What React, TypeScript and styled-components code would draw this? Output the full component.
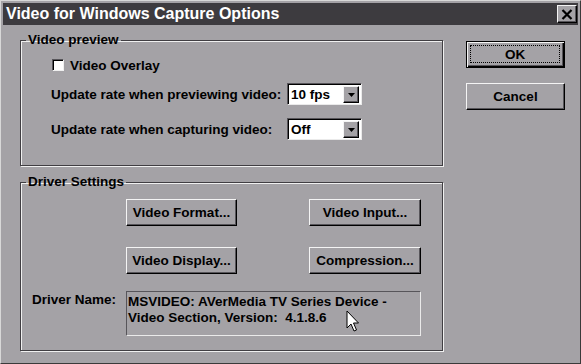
import React from "react";
import styled, { createGlobalStyle, css } from "styled-components";

const GlobalStyle = createGlobalStyle`
  html, body { margin: 0; padding: 0; background: #a4a2a6; }
  body { font-family: "Liberation Sans", Arial, sans-serif; }
  * { box-sizing: border-box; }
`;

const BG = "#a4a2a6";
const DARK = "#57555a";

const raised = css`
  border-top: 1px solid #f4f4f4;
  border-left: 1px solid #f4f4f4;
  border-right: 1px solid #000;
  border-bottom: 1px solid #000;
  box-shadow: inset -1px -1px 0 ${DARK};
`;

const Window = styled.div`
  width: 581px;
  height: 364px;
  background: ${BG};
  border-top: 1px solid #d8d8d8;
  border-left: 1px solid #d8d8d8;
  border-right: 1px solid #3a3a3a;
  border-bottom: 1px solid #3a3a3a;
  padding: 2px 2px 0 2px;
  display: flex;
  flex-direction: column;
  position: relative;
  overflow: hidden;
`;

const TitleBar = styled.div`
  height: 22px;
  background: #3d3b3f;
  display: flex;
  align-items: center;
  justify-content: space-between;
  padding: 0 1px 0 3px;
`;

const Title = styled.span`
  color: #fff;
  font-weight: bold;
  font-size: 16px;
`;

const CloseButton = styled.div`
  width: 20px;
  height: 18px;
  background: ${BG};
  ${raised};
  display: flex;
  align-items: center;
  justify-content: center;
`;

const Body = styled.div`
  display: grid;
  grid-template-columns: 423px 99px;
  column-gap: 23px;
  padding: 8px 0 0 17px;
  align-items: start;
`;

const LeftColumn = styled.div`
  display: flex;
  flex-direction: column;
  gap: 9px;
`;

const Group = styled.fieldset<{ $pt: number; $pb: number }>`
  margin: 0;
  min-width: 0;
  width: 423px;
  border: 1px solid #403e42;
  box-shadow: inset 1px 1px 0 #f0f0f0, 1px 1px 0 #f0f0f0;
  padding: ${(p) => p.$pt}px 0 ${(p) => p.$pb}px 0;
`;

const GroupContent = styled.div<{ $pl: number }>`
  padding-left: ${(p) => p.$pl}px;
`;

const Legend = styled.legend`
  margin-left: 5px;
  padding: 0 2px;
  font-size: 13.5px;
  line-height: 14px;
  font-weight: bold;
  color: #000;
`;

const Text = styled.span`
  font-size: 13.5px;
  font-weight: bold;
  color: #000;
  white-space: nowrap;
`;

const CheckRow = styled.label`
  display: flex;
  align-items: center;
  gap: 6px;
  height: 16px;
  padding-left: 1px;
  margin-bottom: 10px;
`;

const CheckBox = styled.span`
  width: 12px;
  height: 12px;
  background: #fff;
  border-top: 1px solid ${DARK};
  border-left: 1px solid ${DARK};
  border-right: 1px solid #f0f0f0;
  border-bottom: 1px solid #f0f0f0;
  box-shadow: inset 1px 1px 0 #000;
`;

const RateGrid = styled.div`
  display: grid;
  grid-template-columns: 236px 75px;
  row-gap: 13px;
  align-items: center;
`;

const Select = styled.div`
  height: 22px;
  width: 75px;
  background: #fff;
  border-top: 1px solid ${DARK};
  border-left: 1px solid ${DARK};
  border-right: 1px solid #eaeaea;
  border-bottom: 1px solid #eaeaea;
  box-shadow: inset 1px 1px 0 #000;
  display: flex;
  align-items: stretch;
  padding: 2px 2px 1px 3px;
`;

const SelectValue = styled.span`
  flex: 1;
  font-size: 13.5px;
  font-weight: bold;
  display: flex;
  align-items: center;
`;

const ArrowButton = styled.div`
  width: 16px;
  background: ${BG};
  ${raised};
  display: flex;
  align-items: center;
  justify-content: center;
`;

const DriverGrid = styled.div`
  display: grid;
  grid-template-columns: 94px 111px 72px 112px;
  grid-template-rows: 27px 27px 45px;
  row-gap: 21px;
  align-items: stretch;
`;

const PushButton = styled.div<{ $col: number }>`
  grid-column: ${(p) => p.$col};
  background: ${BG};
  ${raised};
  display: flex;
  align-items: center;
  justify-content: center;
  font-size: 13.5px;
  font-weight: bold;
  color: #000;
`;

const NameLabel = styled(Text)`
  grid-column: 1;
  margin-top: -3px;
`;

const NameBox = styled.div`
  grid-column: 2 / 5;
  margin-top: -4px;
  height: 45px;
  border-top: 1px solid ${DARK};
  border-left: 1px solid ${DARK};
  border-right: 1px solid #eaeaea;
  border-bottom: 1px solid #eaeaea;
  padding: 2px 0 0 1px;
  font-size: 13.5px;
  font-weight: bold;
  line-height: 16px;
  color: #000;
`;

const NameRow = styled.div`
  display: contents;
`;

const RightColumn = styled.div`
  display: flex;
  flex-direction: column;
  gap: 15px;
  padding-top: 8px;
`;

const DialogButton = styled.div<{ $default?: boolean }>`
  height: 27px;
  background: ${BG};
  display: flex;
  align-items: center;
  justify-content: center;
  font-size: 13.5px;
  font-weight: bold;
  color: #000;
  ${(p) =>
    p.$default
      ? css`
          border: 1px solid #000;
          box-shadow: inset 1px 1px 0 #f4f4f4, inset -1px -1px 0 #000, inset -2px -2px 0 ${DARK};
        `
      : raised}
`;

const Focus = styled.span`
  flex: 1;
  align-self: stretch;
  margin: 3px 4px 4px 3px;
  border: 1px dotted #000;
  display: flex;
  align-items: center;
  justify-content: center;
`;

const Cursor = styled.svg`
  position: absolute;
  left: 345px;
  top: 309px;
`;

const DownArrow = () => (
  <svg width="7" height="4" viewBox="0 0 7 4">
    <path d="M0 0 H7 L3.5 4 Z" fill="#000" />
  </svg>
);

export default function App() {
  return (
    <>
      <GlobalStyle />
      <Window>
        <TitleBar>
          <Title>Video for Windows Capture Options</Title>
          <CloseButton>
            <svg width="12" height="11" viewBox="0 0 12 11">
              <path d="M1.5 1 L10.5 10 M10.5 1 L1.5 10" stroke="#000" strokeWidth="2.2" />
            </svg>
          </CloseButton>
        </TitleBar>
        <Body>
          <LeftColumn>
            <Group $pt={10} $pb={25}>
              <Legend>Video preview</Legend>
              <GroupContent $pl={30}>
                <CheckRow>
                  <CheckBox />
                  <Text>Video Overlay</Text>
                </CheckRow>
                <RateGrid>
                  <Text>Update rate when previewing video:</Text>
                  <Select>
                    <SelectValue>10 fps</SelectValue>
                    <ArrowButton>
                      <DownArrow />
                    </ArrowButton>
                  </Select>
                  <Text>Update rate when capturing video:</Text>
                  <Select>
                    <SelectValue>Off</SelectValue>
                    <ArrowButton>
                      <DownArrow />
                    </ArrowButton>
                  </Select>
                </RateGrid>
              </GroupContent>
            </Group>
            <Group $pt={10} $pb={10}>
              <Legend>Driver Settings</Legend>
              <GroupContent $pl={11}>
                <DriverGrid>
                  <PushButton $col={2}>Video Format...</PushButton>
                  <PushButton $col={4}>Video Input...</PushButton>
                  <PushButton $col={2}>Video Display...</PushButton>
                  <PushButton $col={4}>Compression...</PushButton>
                  <NameRow>
                    <NameLabel>Driver Name:</NameLabel>
                    <NameBox>
                      MSVIDEO: AVerMedia TV Series Device -<br />
                      Video Section, Version:&nbsp; 4.1.8.6
                    </NameBox>
                  </NameRow>
                </DriverGrid>
              </GroupContent>
            </Group>
          </LeftColumn>
          <RightColumn>
            <DialogButton $default>
              <Focus>OK</Focus>
            </DialogButton>
            <DialogButton>Cancel</DialogButton>
          </RightColumn>
        </Body>
        <Cursor width="14" height="24" viewBox="0 0 14 24">
          <path d="M1 1 L1 18 L5 14 L8 21 L10.5 20 L7.5 13 L12.5 13 Z" fill="#fff" stroke="#000" strokeWidth="1" />
        </Cursor>
      </Window>
    </>
  );
}
